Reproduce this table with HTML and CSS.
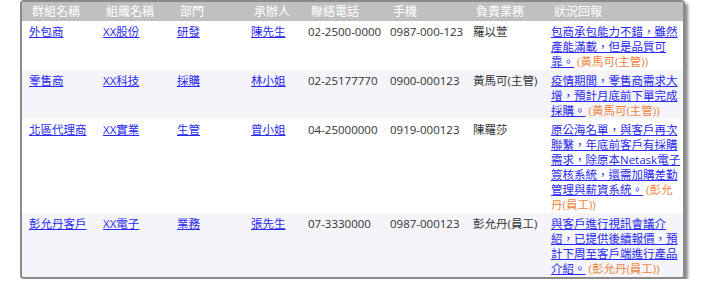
FILE: index.html
```html
<!DOCTYPE html>
<html lang="zh-Hant">
<head>
<meta charset="utf-8">
<title>群組清單</title>
<link rel="stylesheet" href="styles.css">
</head>
<body>
<div class="panel">
  <table class="grid">
    <colgroup>
      <col class="c1"><col class="c2"><col class="c3"><col class="c4"><col class="c5"><col class="c6"><col class="c7"><col class="c8">
    </colgroup>
    <thead>
      <tr>
        <th>群組名稱</th><th>組織名稱</th><th>部門</th><th>承辦人</th><th>聯絡電話</th><th>手機</th><th>負責業務</th><th>狀況回報</th>
      </tr>
    </thead>
    <tbody>
      <tr>
        <td><a href="#">外包商</a></td>
        <td><a href="#">XX股份</a></td>
        <td><a href="#">研發</a></td>
        <td><a href="#">陳先生</a></td>
        <td>02-2500-0000</td>
        <td>0987-000-123</td>
        <td>羅以萱</td>
        <td class="status"><a href="#">包商承包能力不錯，雖然產能滿載，但是品質可靠。</a> <span class="by">(黃馬可(主管))</span></td>
      </tr>
      <tr class="alt">
        <td><a href="#">零售商</a></td>
        <td><a href="#">XX科技</a></td>
        <td><a href="#">採購</a></td>
        <td><a href="#">林小姐</a></td>
        <td>02-25177770</td>
        <td>0900-000123</td>
        <td>黃馬可(主管)</td>
        <td class="status"><a href="#">疫情期間，零售商需求大增，預計月底前下單完成採購。</a> <span class="by">(黃馬可(主管))</span></td>
      </tr>
      <tr>
        <td><a href="#">北區代理商</a></td>
        <td><a href="#">XX實業</a></td>
        <td><a href="#">生管</a></td>
        <td><a href="#">曾小姐</a></td>
        <td>04-25000000</td>
        <td>0919-000123</td>
        <td>陳羅莎</td>
        <td class="status"><a href="#">原公海名單，與客戶再次聯繫，年底前客戶有採購需求，除原本Netask電子簽核系統，還需加購差勤管理與薪資系統。</a> <span class="by">(彭允丹(員工))</span></td>
      </tr>
      <tr class="alt">
        <td><a href="#">彭允丹客戶</a></td>
        <td><a href="#">XX電子</a></td>
        <td><a href="#">業務</a></td>
        <td><a href="#">張先生</a></td>
        <td>07-3330000</td>
        <td>0987-000123</td>
        <td>彭允丹(員工)</td>
        <td class="status"><a href="#">與客戶進行視訊會議介紹，已提供後續報價，預計下周至客戶端進行產品介紹。</a> <span class="by">(彭允丹(員工))</span></td>
      </tr>
    </tbody>
  </table>
</div>
</body>
</html>
```

FILE: styles.css
```css
html, body {
  margin: 0;
  padding: 0;
  background: #ffffff;
}

body {
  font-family: "Open Sans", "Noto Sans CJK TC", sans-serif;
  font-size: 11.5px;
  line-height: 15px;
  color: #333333;
}

.panel {
  margin-left: 20px;
  width: 661px;
  border: 2px solid #8a8a8a;
  border-radius: 4px;
  box-shadow: 3px 3px 3px rgba(0, 0, 0, 0.45);
  overflow: hidden;
  background: #ffffff;
}

.grid {
  width: 661px;
  border-collapse: collapse;
  table-layout: fixed;
}

.c1 { width: 74px; }
.c2 { width: 74px; }
.c3 { width: 74px; }
.c4 { width: 57px; }
.c5 { width: 82px; }
.c6 { width: 83px; }
.c7 { width: 78px; }
.c8 { width: 139px; }

.grid th {
  background: #c0c0c0;
  color: #ffffff;
  font-size: 12px;
  font-weight: normal;
  text-align: left;
  padding: 2px 2px 2px 10px;
  white-space: nowrap;
}

.grid td {
  vertical-align: top;
  padding: 3px 2px 1px 7px;
  white-space: nowrap;
}

.grid td.status {
  white-space: normal;
}

.grid tr.alt td {
  background: #f4f4f9;
}

.grid a {
  color: #2a2af0;
  text-decoration: underline;
}

.by {
  color: #f0843c;
}
```
